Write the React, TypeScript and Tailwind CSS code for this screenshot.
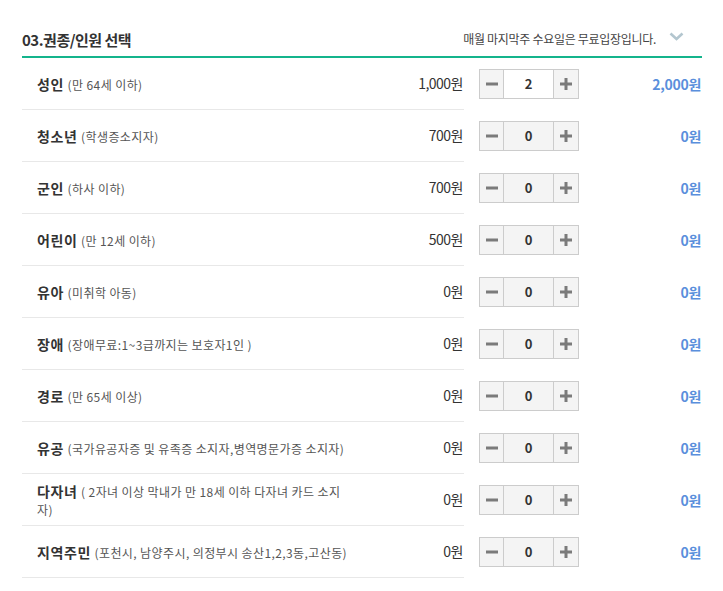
type Ticket = {
  name: string;
  desc: string;
  price: string;
  count: number;
  total: string;
};

const tickets: Ticket[] = [
  { name: "성인", desc: "(만 64세 이하)", price: "1,000원", count: 2, total: "2,000원" },
  { name: "청소년", desc: "(학생증소지자)", price: "700원", count: 0, total: "0원" },
  { name: "군인", desc: "(하사 이하)", price: "700원", count: 0, total: "0원" },
  { name: "어린이", desc: "(만 12세 이하)", price: "500원", count: 0, total: "0원" },
  { name: "유아", desc: "(미취학 아동)", price: "0원", count: 0, total: "0원" },
  { name: "장애", desc: "(장애무료:1~3급까지는 보호자1인 )", price: "0원", count: 0, total: "0원" },
  { name: "경로", desc: "(만 65세 이상)", price: "0원", count: 0, total: "0원" },
  { name: "유공", desc: "(국가유공자증 및 유족증 소지자,병역명문가증 소지자)", price: "0원", count: 0, total: "0원" },
  { name: "다자녀", desc: "( 2자녀 이상 막내가 만 18세 이하 다자녀 카드 소지자)", price: "0원", count: 0, total: "0원" },
  { name: "지역주민", desc: "(포천시, 남양주시, 의정부시 송산1,2,3동,고산동)", price: "0원", count: 0, total: "0원" },
];

function Stepper({ count }: { count: number }) {
  return (
    <div className="flex h-[30px] w-[100px] border border-[#cccccc] bg-[#f4f4f4]">
      <button type="button" className="flex w-[24px] items-center justify-center border-r border-[#cccccc]">
        <svg width="12" height="12" viewBox="0 0 12 12">
          <rect x="0" y="4.5" width="12" height="3" fill="#7b7b7b" />
        </svg>
      </button>
      <div
        className={`flex flex-1 items-center justify-center text-[13px] font-bold text-[#333] ${
          count > 0 ? "bg-white" : ""
        }`}
      >
        {count}
      </div>
      <button type="button" className="flex w-[25px] items-center justify-center border-l border-[#cccccc]">
        <svg width="12" height="12" viewBox="0 0 12 12">
          <rect x="0" y="4.5" width="12" height="3" fill="#7b7b7b" />
          <rect x="4.5" y="0" width="3" height="12" fill="#7b7b7b" />
        </svg>
      </button>
    </div>
  );
}

export default function App() {
  return (
    <div
      className="min-h-[591px] bg-white pl-[22px] text-[#333]"
      style={{ fontFamily: '"Noto Sans CJK KR", "Noto Sans", sans-serif' }}
    >
      <div className="w-[680px]">
        <div className="flex h-[58px] items-end justify-between border-b-2 border-[#14b48c] pb-[5px]">
          <h2 className="text-[15px] font-bold leading-[22px] tracking-[-0.5px] text-[#333]">03.권종/인원 선택</h2>
          <div className="mb-[4px] mr-[18px] flex items-center gap-[13px]">
            <span className="text-[12px] leading-[16px] tracking-[-0.3px] text-[#444]">매월 마지막주 수요일은 무료입장입니다.</span>
            <svg width="15" height="9" viewBox="0 0 15 9" className="mb-[6px]">
              <path d="M1.5 1.5 L7.5 7 L13.5 1.5" fill="none" stroke="#b3c6cf" strokeWidth="2.6" />
            </svg>
          </div>
        </div>

        {tickets.map((t) => (
          <div key={t.name} className="flex items-center">
            <div className="flex h-[52px] w-[442px] items-center border-b border-[#e8e8e8]">
              <div className="w-[340px] pl-[15px] pr-[8px] leading-[17px]">
                <span className="text-[14px] font-bold tracking-[0.6px] text-[#333]">{t.name}</span>{" "}
                <span className="text-[12px] tracking-[0.4px] text-[#555]">{t.desc}</span>
              </div>
              <div className="flex-1 pr-[1px] text-right text-[14px] tracking-[-0.5px] text-[#333]">{t.price}</div>
            </div>
            <div className="ml-[15px]">
              <Stepper count={t.count} />
            </div>
            <div className="flex-1 pr-[1px] text-right text-[14px] font-bold tracking-[-0.3px] text-[#5a8fdc]">{t.total}</div>
          </div>
        ))}
      </div>
    </div>
  );
}
